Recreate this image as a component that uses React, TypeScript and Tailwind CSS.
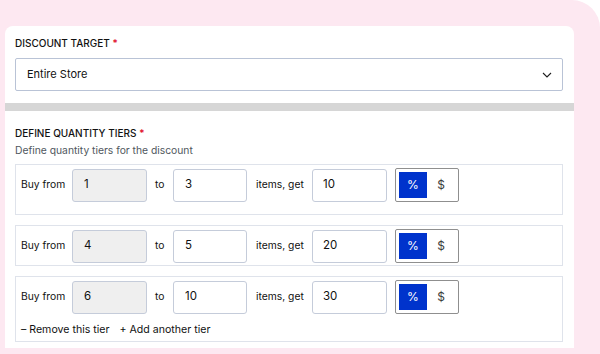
import React from "react";

type Tier = { from: string; to: string; amount: string; links?: boolean; spacer?: boolean };

const tiers: Tier[] = [
  { from: "1", to: "3", amount: "10", spacer: true },
  { from: "4", to: "5", amount: "20" },
  { from: "6", to: "10", amount: "30", links: true },
];

function TierRow({ tier }: { tier: Tier }) {
  return (
    <div className="border border-[#dfe3eb] px-[5px] pt-[3px] pb-[2px]">
      <div className="flex items-center h-[34px] text-[10.3px] text-[#111]">
        <span className="w-[51px]">Buy from</span>
        <div className="w-[75px] h-[33px] rounded-[3px] border border-[#c5ccda] bg-[#efefef] flex items-center pl-[11px] text-[11.5px]">
          {tier.from}
        </div>
        <span className="w-[26px] pl-[8px]">to</span>
        <div className="w-[74px] h-[33px] rounded-[3px] border border-[#c5ccda] bg-white flex items-center pl-[11px] text-[11.5px]">
          {tier.to}
        </div>
        <span className="w-[65px] pl-[9px]">items, get</span>
        <div className="w-[75px] h-[33px] rounded-[3px] border border-[#c5ccda] bg-white flex items-center pl-[10px] text-[11.5px]">
          {tier.amount}
        </div>
        <div className="ml-[8px] w-[64px] h-[34px] rounded-[2px] border border-[#8f8f8f] p-[3px] flex">
          <div className="w-[28px] h-full bg-[#0033cc] text-white flex items-center justify-center text-[12px]">%</div>
          <div className="flex-1 flex items-center justify-center text-[12px] text-[#3c3c3c]">$</div>
        </div>
      </div>
      {tier.spacer && <div className="h-[10px]" />}
      {tier.links && (
        <div className="flex gap-[10px] mt-[8px] mb-[1px] h-[16px] items-center text-[10.6px] text-[#111]">
          <span>– Remove this tier</span>
          <span>+ Add another tier</span>
        </div>
      )}
    </div>
  );
}

export default function App() {
  return (
    <div className="w-[600px] h-[354px] bg-white overflow-hidden font-['Inter','Noto_Sans',sans-serif]">
      <div className="h-full bg-[#fde8f1] rounded-tr-[28px] pt-[26px] pl-[5px]">
        <div className="w-[569px] bg-white rounded-t-[8px]">
          {/* Discount target */}
          <div className="pt-[9px] pl-[10px] pr-[11px] pb-[12px]">
            <div className="text-[10px] leading-4 font-medium text-[#111] uppercase">
              Discount Target <span className="text-[#e0001b]">*</span>
            </div>
            <div className="mt-[7px] h-[33px] border border-[#b9c3d6] rounded-[2px] flex items-center justify-between pl-[11px] pr-[10px]">
              <span className="text-[11px] text-[#111]">Entire Store</span>
              <svg width="10" height="6" viewBox="0 0 10 6" fill="none">
                <path d="M1 1l4 4 4-4" stroke="#1e1e1e" strokeWidth="1.1" />
              </svg>
            </div>
          </div>

          <div className="h-[8px] bg-[#d6d6d6]" />

          {/* Quantity tiers */}
          <div className="pt-[14px] pl-[10px] pr-[11px] pb-[6px]">
            <div className="text-[10px] leading-4 font-medium text-[#111] uppercase">
              Define Quantity Tiers <span className="text-[#e0001b]">*</span>
            </div>
            <div className="mt-[1px] text-[10.3px] leading-4 text-[#50575e]">Define quantity tiers for the discount</div>
            <div className="mt-[6px] flex flex-col gap-[10px]">
              {tiers.map((t, i) => (
                <TierRow key={i} tier={t} />
              ))}
            </div>
          </div>
        </div>
      </div>
    </div>
  );
}
